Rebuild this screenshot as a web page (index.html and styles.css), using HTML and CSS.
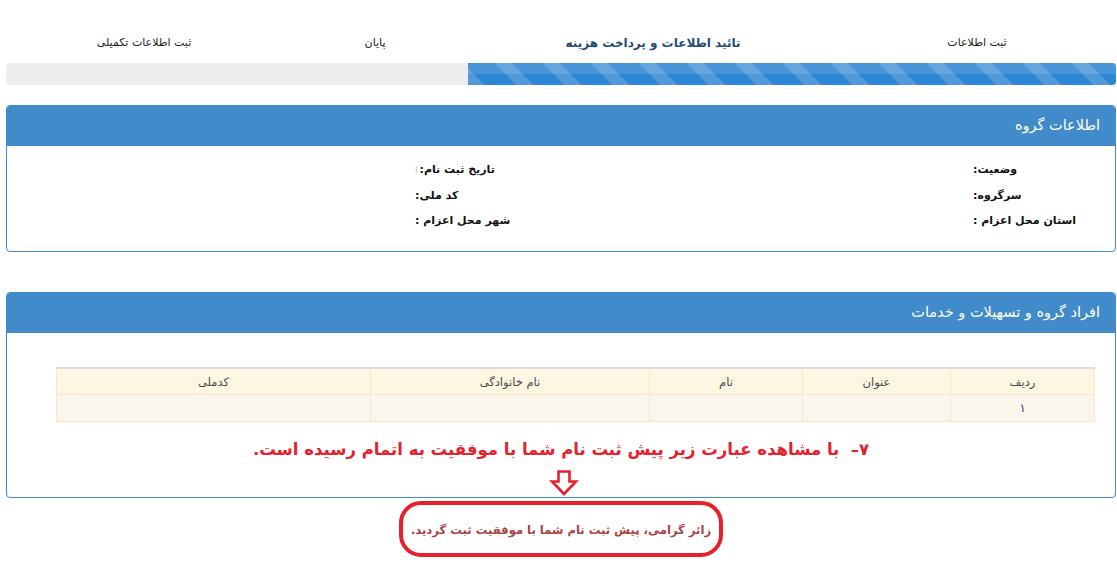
FILE: index.html
```html
<!DOCTYPE html>
<html lang="fa" dir="rtl">
<head>
<meta charset="utf-8">
<title>پیش ثبت نام</title>
<link rel="stylesheet" href="styles.css">
</head>
<body>
<div class="page">
  <div class="steps">
    <div class="step">ثبت اطلاعات</div>
    <div class="step active">تائید اطلاعات و پرداخت هزینه</div>
    <div class="step">پایان</div>
    <div class="step">ثبت اطلاعات تکمیلی</div>
  </div>
  <div class="progress"><div class="bar" style="width:58.4%"></div></div>

  <div class="panel panel-info">
    <div class="panel-heading">اطلاعات گروه</div>
    <div class="panel-body info-grid">
      <div class="c1"><b>وضعیت:</b></div>
      <div class="c2"><b>تاریخ ثبت نام:</b><span class="val">ا</span></div>
      <div class="c3"></div>
      <div class="c1"><b>سرگروه:</b></div>
      <div class="c2"><b>کد ملی:</b></div>
      <div class="c3"></div>
      <div class="c1"><b>استان محل اعزام :</b></div>
      <div class="c2"><b>شهر محل اعزام :</b></div>
      <div class="c3"></div>
    </div>
  </div>

  <div class="panel panel-members">
    <div class="panel-heading">افراد گروه و تسهیلات و خدمات</div>
    <div class="panel-body members-body">
      <table class="members">
        <colgroup>
          <col class="w1"><col class="w2"><col class="w3"><col class="w4"><col class="w5">
        </colgroup>
        <thead>
          <tr><th>ردیف</th><th>عنوان</th><th>نام</th><th>نام خانوادگی</th><th>کدملی</th></tr>
        </thead>
        <tbody>
          <tr><td class="num">۱</td><td></td><td></td><td></td><td></td></tr>
        </tbody>
      </table>
      <div class="note">۷–&nbsp; با مشاهده عبارت زیر پیش ثبت نام شما با موفقیت به اتمام رسیده است.</div>
      <div class="arrow">
        <svg width="30" height="26" viewBox="0 0 30 26"><path d="M9.5 1.5 H20.5 V11.5 H27 L15 24 L3 11.5 H9.5 Z" fill="#fff" stroke="#e8202a" stroke-width="2.6" stroke-linejoin="miter"/></svg>
      </div>
    </div>
  </div>

  <div class="alert-wrap">
    <div class="alert">زائر گرامی، پیش ثبت نام شما با موفقیت ثبت گردید.</div>
  </div>
</div>
</body>
</html>
```
FILE: styles.css
```css
html, body {
  margin: 0;
  padding: 0;
  background: #fff;
}
body {
  font-family: "DejaVu Sans", Tahoma, sans-serif;
  color: #222;
  direction: rtl;
}
.page {
  margin: 0 1px 0 6px;
  padding-top: 32px;
}
.steps {
  display: grid;
  grid-template-columns: 278px 370px 186px 1fr;
  font-size: 11px;
  line-height: 22px;
  height: 22px;
  color: #222;
}
.step {
  text-align: center;
}
.step.active {
  font-weight: bold;
  font-size: 12px;
  color: #1f4d7a;
}
.progress {
  margin-top: 9px;
  height: 22px;
  background: #ededed;
  border-radius: 4px;
  overflow: hidden;
}
.bar {
  height: 100%;
  background-color: #2d86d3;
  background-image:
    linear-gradient(to bottom, rgba(255,255,255,0.12) 0, rgba(255,255,255,0.12) 48%, rgba(255,255,255,0) 48%),
    repeating-linear-gradient(45deg, rgba(255,255,255,0.17) 0, rgba(255,255,255,0.17) 12px, rgba(255,255,255,0) 12px, rgba(255,255,255,0) 34px);
}
.panel {
  border: 1px solid #428bca;
  border-radius: 4px;
  background: #fff;
  overflow: hidden;
}
.panel-info {
  margin-top: 20px;
}
.panel-members {
  margin-top: 40px;
}
.panel-heading {
  background: #428bca;
  color: #fff;
  font-size: 14.5px;
  height: 40px;
  line-height: 38px;
  padding: 0 15px;
}
.info-grid {
  display: grid;
  grid-template-columns: 127px 558px 1fr;
  padding: 11px 15px 18px;
  font-size: 11px;
  line-height: 25px;
  color: #111;
}
.info-grid .c1, .info-grid .c2 {
  text-align: left;
}
.val {
  color: #bbb;
  font-size: 9px;
  margin-right: 2px;
}
.members-body {
  padding: 34px 20px 0;
}
.members {
  width: 1038px;
  table-layout: fixed;
  border-collapse: collapse;
  font-size: 11.5px;
  color: #555;
}
.members th {
  background: #fcf6e2;
  border: 1px solid #f7e7c6;
  border-top: 2px solid #ddd;
  height: 25px;
  padding: 0;
  font-weight: normal;
  color: #4a4a4a;
  text-align: center;
}
.members td {
  background: #f9f6ee;
  border: 1px solid #f7e7c6;
  height: 26px;
  padding: 0;
  text-align: center;
}
.members .w1 { width: 144px; }
.members .w2 { width: 148px; }
.members .w3 { width: 153px; }
.members .w4 { width: 279px; }
.members .w5 { width: 314px; }
.members td.num {
  color: #3a1f7a;
}
.note {
  text-align: center;
  color: #e8202a;
  font-weight: bold;
  font-size: 16.5px;
  line-height: 26px;
  margin-top: 15px;
}
.arrow {
  display: flex;
  justify-content: center;
  margin-top: 7px;
  height: 27px;
  margin-left: 6px;
}
.alert-wrap {
  display: flex;
  justify-content: center;
  padding-top: 3px;
}
.alert {
  width: 316px;
  height: 48px;
  border: 4px solid #e8202a;
  border-radius: 22px;
  color: #a94442;
  font-weight: bold;
  font-size: 11.6px;
  line-height: 50px;
  white-space: nowrap;
  text-align: center;
}
```
